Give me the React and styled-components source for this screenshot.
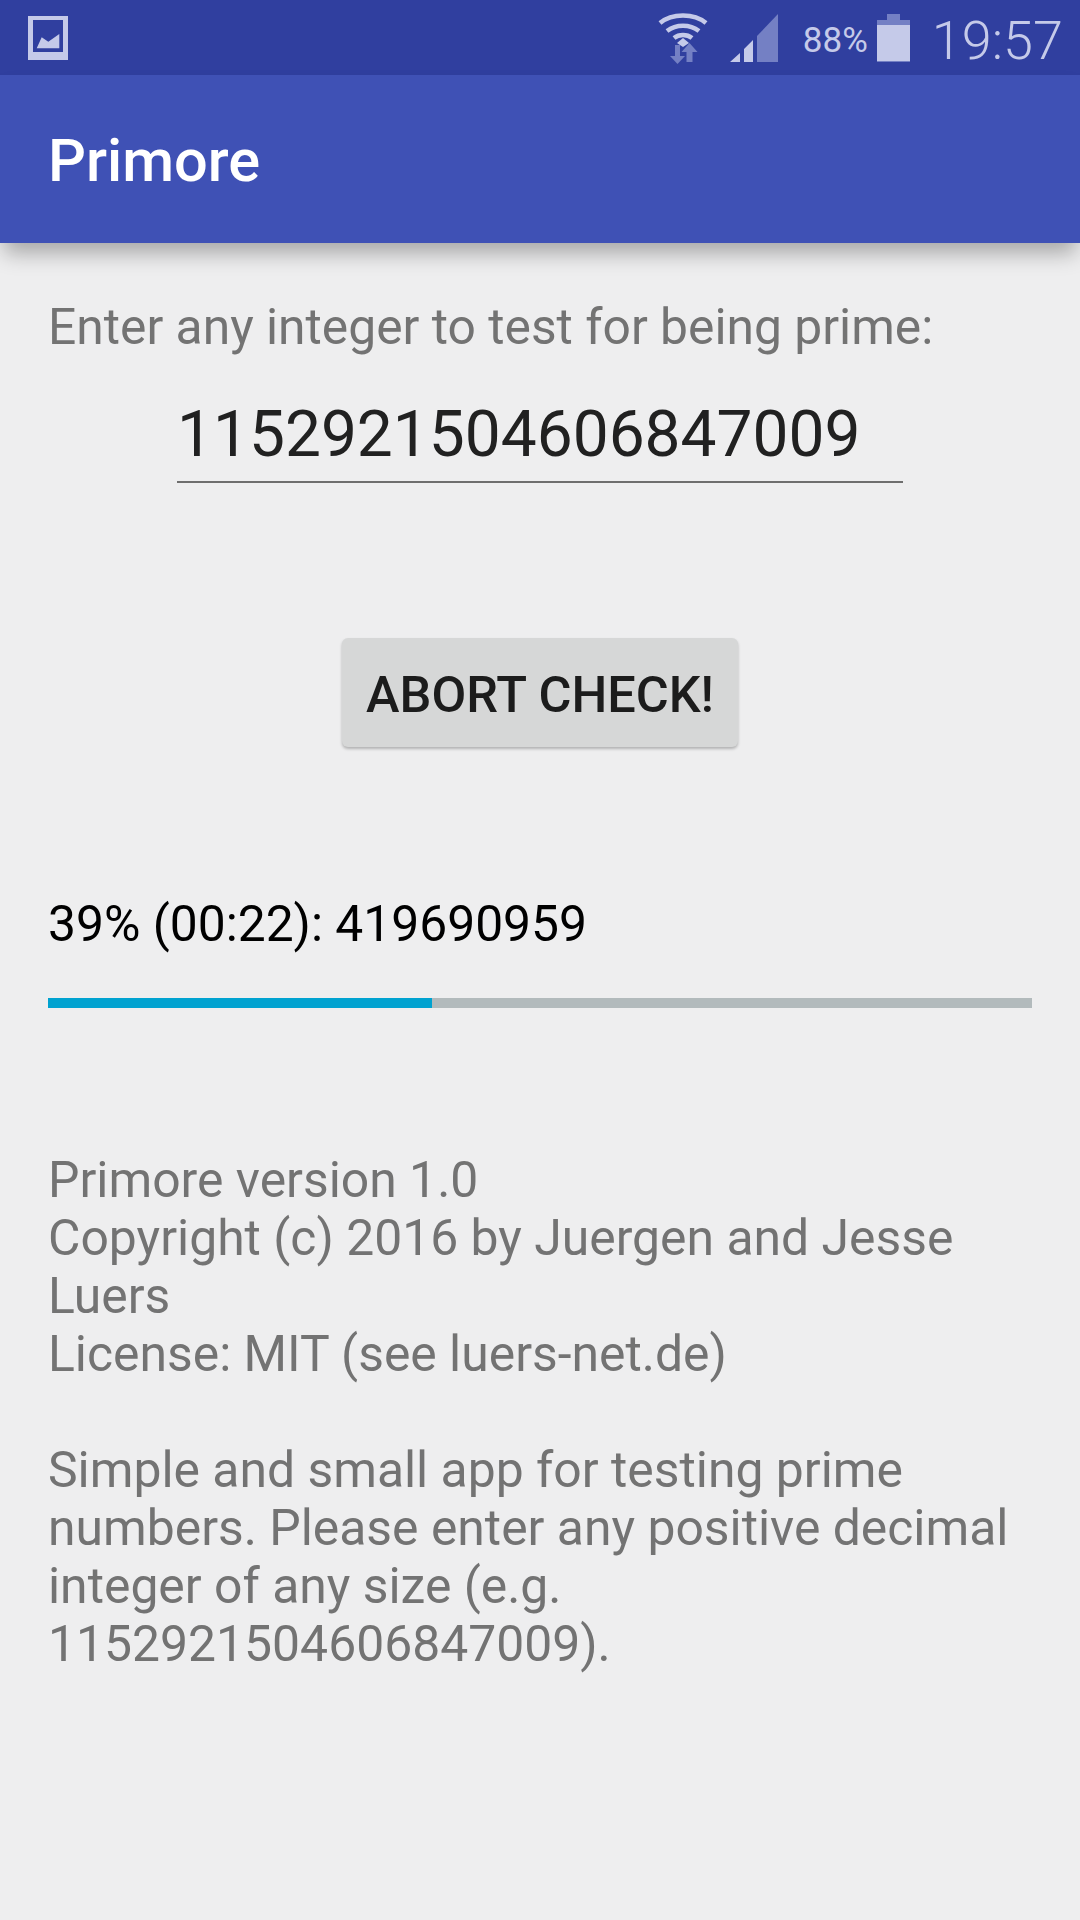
import React from 'react';
import styled, { createGlobalStyle } from 'styled-components';

const GlobalStyle = createGlobalStyle`
  html, body { margin: 0; padding: 0; background: #eeeeef; }
  body { font-family: Roboto, "Liberation Sans", sans-serif; }
`;

const Screen = styled.div`
  width: 1080px;
  height: 1920px;
  background: #eeeeef;
  overflow: hidden;
  display: flex;
  flex-direction: column;
`;

const StatusBar = styled.div`
  height: 75px;
  flex: none;
  background: #303f9f;
  color: #c5cae9;
  display: flex;
  align-items: center;
  padding: 0 17px 0 28px;
`;

const StatusRight = styled.div`
  margin-left: auto;
  display: flex;
  align-items: center;
`;

const SignalSlot = styled.span`
  display: flex;
  margin-left: 22px;
`;

const Battery = styled.span`
  font-size: 35px;
  line-height: 75px;
  margin: 6px 9px 0 25px;
`;

const Clock = styled.span`
  font-size: 54px;
  font-weight: 300;
  line-height: 75px;
  margin: 6px 0 0 22px;
`;

const AppBar = styled.header`
  height: 168px;
  flex: none;
  background: #3f51b5;
  color: #fff;
  display: flex;
  align-items: center;
  padding: 4px 48px 0;
  box-sizing: border-box;
  font-size: 59.5px;
  font-weight: 500;
  box-shadow: 0 14px 20px -4px rgba(0, 0, 0, 0.3);
  position: relative;
`;

const Content = styled.main`
  padding: 0 48px;
  display: flex;
  flex-direction: column;
`;

const Prompt = styled.div`
  margin-top: 56px;
  font-size: 49.750px;
  line-height: 57px;
  color: #737373;
`;

const NumberField = styled.div`
  align-self: center;
  width: 726px;
  margin-top: 36px;
  padding-bottom: 4px;
  border-bottom: 2.500px solid #6e6e6e;
  font-size: 64px;
  line-height: 85px;
  color: #212121;
`;

const AbortButton = styled.button`
  align-self: center;
  margin-top: 155px;
  width: 396px;
  height: 109px;
  border: 0;
  border-radius: 6px;
  background: #d6d7d7;
  color: #1c1c1c;
  font-family: inherit;
  font-size: 50.500px;
  font-weight: 500;
  padding: 3px 0 0;
  box-shadow: 0 2px 3px rgba(0, 0, 0, 0.25);
`;

const ProgressLabel = styled.div`
  margin-top: 149px;
  font-size: 49.750px;
  line-height: 57px;
  color: #000;
`;

const Track = styled.div`
  margin-top: 45px;
  height: 10px;
  background: #b2babc;
`;

const Fill = styled.div`
  height: 100%;
  background: #00a2d0;
`;

const About = styled.div`
  margin-top: 143px;
  font-size: 49.850px;
  line-height: 58px;
  color: #737373;
  white-space: pre-line;
`;

const ImageIcon = () => (
  <svg width="40" height="44" viewBox="0 0 40 44">
    <path fill="#c5cae9" fillRule="evenodd" d="M0 0h40v44H0zM5 4v32h30V4z" />
    <path fill="#c5cae9" d="M8.700 32.300L13.700 21.300L20.300 25.700L31.300 18V32.300z" />
  </svg>
);

const WifiIcon = () => (
  <svg width="50" height="52" viewBox="0 0 50 52">
    <path fill="none" stroke="#c5cae9" strokeWidth="4.5" d="M2 11C14 1 36 1 48 11M9 19C18 12 32 12 41 19M16 26C21 22 29 22 34 26" />
    <path fill="#c5cae9" d="M19 31l6-5 6 5-6 4z" />
    <path fill="#7480c4" d="M17 33h5v11h5l-7.500 8-7.500-8h5z" />
    <path fill="#7480c4" d="M31.500 31l8 9h-5v10h-6V40h-5z" />
  </svg>
);

const SignalIcon = () => (
  <svg width="48" height="48" viewBox="0 0 48 48">
    <path fill="#c5cae9" d="M0 48l10-9v9zM14 48V35l9-9v22z" />
    <path fill="#7480c4" d="M27 48V22L48 0v48z" />
  </svg>
);

const BatteryIcon = () => (
  <svg width="33" height="48" viewBox="0 0 33 48">
    <path fill="#7480c4" d="M10 0h13v6h10v42H0V6h10z" />
    <path fill="#c5cae9" d="M0 11h33v36H0z" />
  </svg>
);

const App = () => {
  const percent = 39;
  return (
    <Screen>
      <GlobalStyle />
      <StatusBar>
        <ImageIcon />
        <StatusRight>
          <WifiIcon />
          <SignalSlot>
            <SignalIcon />
          </SignalSlot>
          <Battery>88%</Battery>
          <BatteryIcon />
          <Clock>19:57</Clock>
        </StatusRight>
      </StatusBar>
      <AppBar>Primore</AppBar>
      <Content>
        <Prompt>Enter any integer to test for being prime:</Prompt>
        <NumberField>1152921504606847009</NumberField>
        <AbortButton>ABORT CHECK!</AbortButton>
        <ProgressLabel>39% (00:22): 419690959</ProgressLabel>
        <Track>
          <Fill style={{ width: `${percent}%` }} />
        </Track>
        <About>
          {`Primore version 1.0
Copyright (c) 2016 by Juergen and Jesse Luers
License: MIT (see luers-net.de)

Simple and small app for testing prime numbers. Please enter any positive decimal integer of any size (e.g. 1152921504606847009).`}
        </About>
      </Content>
    </Screen>
  );
};

export default App;
